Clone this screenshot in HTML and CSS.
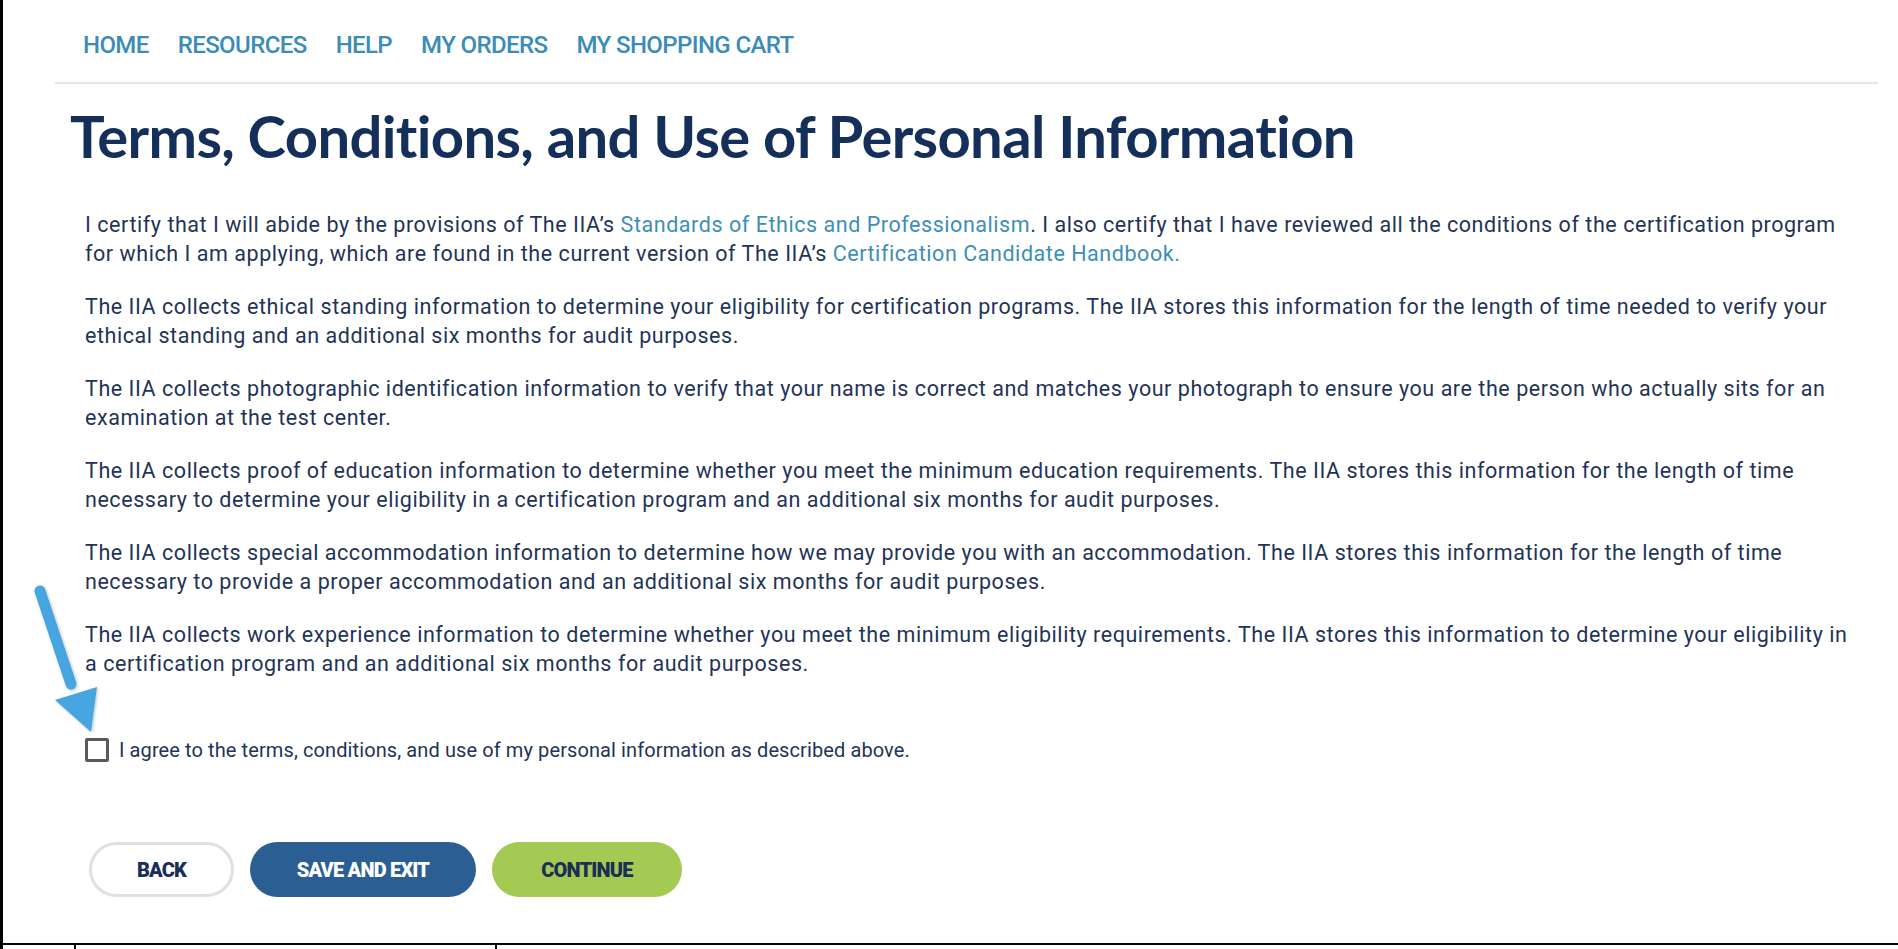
FILE: index.html
```html
<!DOCTYPE html>
<html lang="en">
<head>
    <meta charset="UTF-8">
    <title>Terms, Conditions, and Use of Personal Information</title>
    <link rel="stylesheet" href="styles.css">
</head>
<body>
    <div class="sheet">
        <nav class="topnav">
            <a href="#">HOME</a>
            <a href="#">RESOURCES</a>
            <a href="#">HELP</a>
            <a href="#">MY ORDERS</a>
            <a href="#">MY SHOPPING CART</a>
        </nav>
        <div class="content">
            <h1>Terms, Conditions, and Use of Personal Information</h1>
            <div class="terms">
                <p>I certify that I will abide by the provisions of The IIA’s <a href="#">Standards of Ethics and Professionalism</a>. I also certify that I have reviewed all the conditions of the certification program for which I am applying, which are found in the current version of The IIA’s <a href="#">Certification Candidate Handbook.</a></p>
                <p>The IIA collects ethical standing information to determine your eligibility for certification programs. The IIA stores this information for the length of time needed to verify your ethical standing and an additional six months for audit purposes.</p>
                <p>The IIA collects photographic identification information to verify that your name is correct and matches your photograph to ensure you are the person who actually sits for an examination at the test center.</p>
                <p>The IIA collects proof of education information to determine whether you meet the minimum education requirements. The IIA stores this information for the length of time necessary to determine your eligibility in a certification program and an additional six months for audit purposes.</p>
                <p>The IIA collects special accommodation information to determine how we may provide you with an accommodation. The IIA stores this information for the length of time necessary to provide a proper accommodation and an additional six months for audit purposes.</p>
                <p>The IIA collects work experience information to determine whether you meet the minimum eligibility requirements. The IIA stores this information to determine your eligibility in a certification program and an additional six months for audit purposes.</p>
            </div>
            <label class="agree">
                <input type="checkbox">
                <span class="box"></span>
                <span>I agree to the terms, conditions, and use of my personal information as described above.</span>
            </label>
            <div class="actions">
                <button class="btn btn-back">BACK</button>
                <button class="btn btn-save">SAVE AND EXIT</button>
                <button class="btn btn-go">CONTINUE</button>
            </div>
        </div>
        <!-- pointer arrow at the checkbox -->
        <svg class="pointer" width="80" height="160" viewBox="0 0 80 160">
            <defs>
                <filter id="soft" x="-30%" y="-30%" width="160%" height="160%">
                    <feDropShadow dx="1" dy="1" stdDeviation="1.5" flood-color="#000" flood-opacity="0.25"/>
                </filter>
            </defs>
            <g filter="url(#soft)">
                <line x1="17" y1="19" x2="48" y2="112" stroke="#47a6df" stroke-width="11" stroke-linecap="round"/>
                <polygon points="32,128 74,115 68,160" fill="#47a6df"/>
            </g>
        </svg>
    </div>
    <div class="rowline">
        <div class="cell c1"></div>
        <div class="cell c2"></div>
        <div class="cell c3"></div>
    </div>
</body>
</html>
```
FILE: styles.css
```css
*{margin:0;padding:0;box-sizing:border-box;}
html,body{width:100%;height:100%;background:#fff;}
body{font-family:Roboto,"Open Sans",sans-serif;color:#1f3457;overflow:hidden;}
a{text-decoration:none;}

.sheet{
    position:relative;
    height:945px;
    border-left:3px solid #000;
    border-bottom:2px solid #000;
}

.topnav{
    display:flex;
    gap:29px;
    height:84px;
    margin:0 20px 0 52px;
    padding:32px 0 0 28px;
    border-bottom:2px solid #dfe7ee;
}
.topnav a{
    font-family:Roboto,sans-serif;
    font-weight:500;
    font-size:24px;
    line-height:27px;
    letter-spacing:-0.6px;
    color:#3b8cb8;
}

.content{padding:0 46px 0 67px;}
.content h1{
    font-family:Lato,sans-serif;
    font-size:58px;
    font-weight:700;
    line-height:70px;
    margin:17px 0 0 0;
    color:#142f59;
    letter-spacing:-0.65px;
}

.terms{padding:39px 0 0 15px;}
.terms p{
    font-size:21.5px;
    line-height:29px;
    letter-spacing:0.55px;
    margin-bottom:24px;
}
.terms p a{color:#3d8eb8;}

.agree{
    display:flex;
    align-items:center;
    gap:10px;
    margin:60px 0 0 15px;
    font-size:20px;
    letter-spacing:0.1px;
    cursor:pointer;
}
.agree input{display:none;}
.agree .box{
    width:24px;
    height:24px;
    border:3px solid #5a5a5a;
    border-radius:2px;
}

.actions{
    display:flex;
    gap:16px;
    margin:80px 0 0 19px;
}
.btn{
    height:55px;
    border-radius:28px;
    border:none;
    font-family:Roboto,sans-serif;
    font-weight:900;
    font-size:20px;
    letter-spacing:-0.8px;
    color:#1b2e55;
    cursor:pointer;
}
.btn-back{width:145px;background:#fff;border:3px solid #e0e0de;}
.btn-save{width:226px;background:#2b5f93;color:#fff;}
.btn-go{width:190px;background:#a5ca53;}

.pointer{position:absolute;left:20px;top:572px;}

.rowline{display:flex;height:4px;}
.cell{border-left:2px solid #000;}
.c1{width:74px;border-left-width:3px;}
.c2{width:421px;}
.c3{flex:1;}
```
